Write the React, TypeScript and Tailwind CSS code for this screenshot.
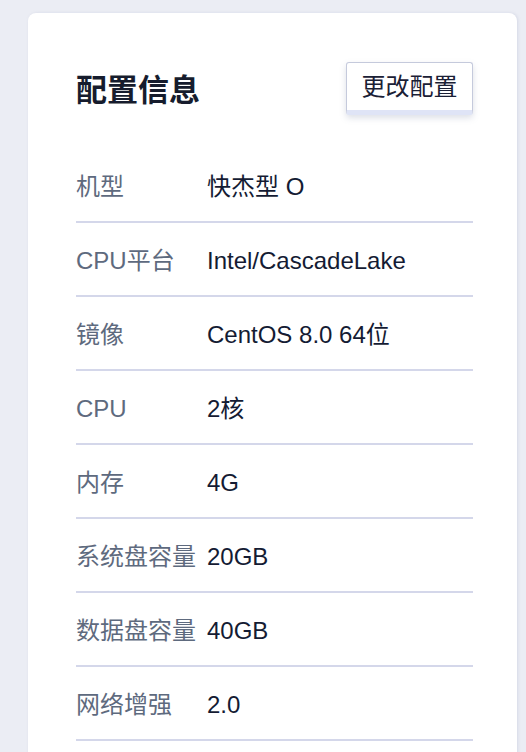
import React from "react";

const ROWS: { label: string; value: string }[] = [
  { label: "机型", value: "快杰型 O" },
  { label: "CPU平台", value: "Intel/CascadeLake" },
  { label: "镜像", value: "CentOS 8.0 64位" },
  { label: "CPU", value: "2核" },
  { label: "内存", value: "4G" },
  { label: "系统盘容量", value: "20GB" },
  { label: "数据盘容量", value: "40GB" },
  { label: "网络增强", value: "2.0" },
];

const FONT = {
  fontFamily: '"Liberation Sans", "Noto Sans CJK SC", sans-serif',
};

export default function App() {
  return (
    <div className="min-h-[752px] bg-[#ebedf4] pt-[13px] pl-[28px] pr-[9px]" style={FONT}>
      <div className="bg-white rounded-[8px] shadow-[1px_0_3px_rgba(150,160,190,0.25)] pt-[49px] pl-[48px] pr-[44px] pb-10">
        <div className="flex items-center justify-between h-[53px]">
          <h2 className="text-[31px] font-bold text-[#161c2d] leading-none pt-[4px]">配置信息</h2>
          <button className="h-[53px] w-[127px] flex items-center justify-center rounded-[3px] border-[1.5px] border-[#c5cadc] border-b-[5px] border-b-[#dfe4f6] bg-white text-[24px] text-[#1a2035] leading-none shadow-[0_3px_6px_rgba(120,130,160,0.25)]">
            更改配置
          </button>
        </div>
        <div className="mt-[34px]">
          {ROWS.map((r) => (
            <div
              key={r.label}
              className="flex items-center h-[74px] pt-[3px] border-b-2 border-[#d4d7ea] text-[24px] leading-none"
            >
              <span className="w-[131px] shrink-0 text-[#5e6a7e]">{r.label}</span>
              <span className="text-[#141b33]">{r.value}</span>
            </div>
          ))}
        </div>
      </div>
    </div>
  );
}
